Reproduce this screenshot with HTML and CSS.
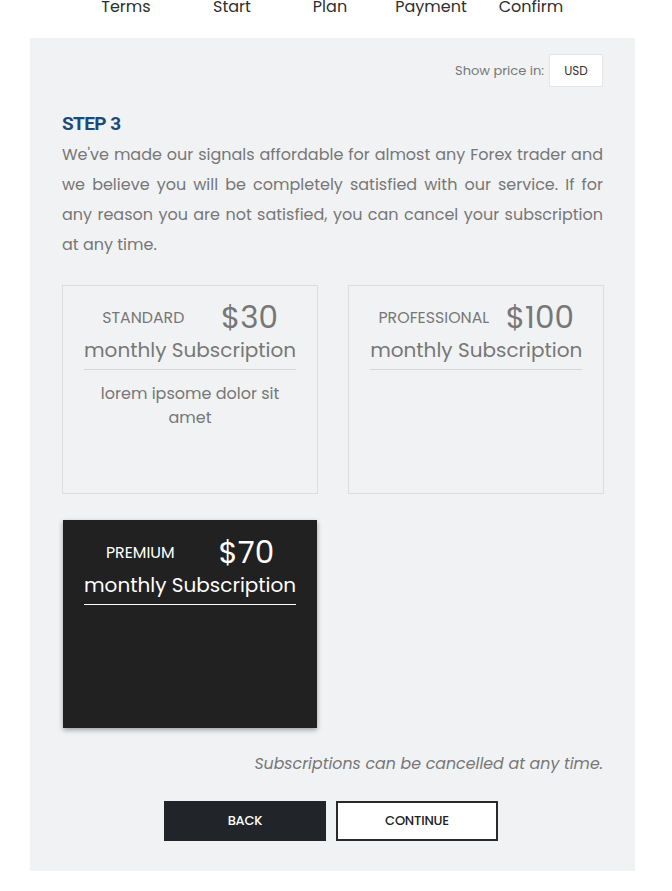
FILE: index.html
```html
<!DOCTYPE html>
<html lang="en">
<head>
<meta charset="utf-8">
<title>Step 3 - Plan</title>
<link rel="stylesheet" href="styles.css">
</head>
<body>
<nav class="steps">
  <span class="step">Terms</span>
  <span class="step">Start</span>
  <span class="step">Plan</span>
  <span class="step">Payment</span>
  <span class="step">Confirm</span>
</nav>
<main class="panel">
  <div class="currency">
    <span class="currency-label">Show price in:</span>
    <span class="currency-box">USD</span>
  </div>
  <h2 class="step-title">STEP 3</h2>
  <p class="intro">We've made our signals affordable for almost any Forex trader and we believe you will be completely satisfied with our service. If for any reason you are not satisfied, you can cancel your subscription at any time.</p>
  <div class="plans">
    <div class="plan">
      <div class="plan-head">
        <div class="plan-top"><span class="plan-name">STANDARD</span><span class="plan-price">$30</span></div>
        <div class="plan-sub">monthly Subscription</div>
      </div>
      <div class="plan-desc">lorem ipsome dolor sit amet</div>
    </div>
    <div class="plan">
      <div class="plan-head">
        <div class="plan-top"><span class="plan-name">PROFESSIONAL</span><span class="plan-price">$100</span></div>
        <div class="plan-sub">monthly Subscription</div>
      </div>
    </div>
    <div class="plan plan-active">
      <div class="plan-head">
        <div class="plan-top"><span class="plan-name">PREMIUM</span><span class="plan-price">$70</span></div>
        <div class="plan-sub">monthly Subscription</div>
      </div>
    </div>
  </div>
  <p class="note">Subscriptions can be cancelled at any time.</p>
  <div class="actions">
    <button class="btn btn-dark">BACK</button>
    <button class="btn btn-outline">CONTINUE</button>
  </div>
</main>
</body>
</html>
```
FILE: styles.css
```css
* { box-sizing: border-box; }
html, body { margin: 0; padding: 0; background: #fff; }
body {
  font-family: Poppins, "Open Sans", sans-serif;
  color: #777;
  overflow: hidden;
}
.steps {
  display: grid;
  grid-template-columns: 106px 106px 90px 112px 88px;
  margin-left: 73px;
  height: 38px;
  align-items: start;
}
.step {
  text-align: center;
  font-size: 16px;
  line-height: 20px;
  margin-top: -3px;
  color: #2e2e2e;
}
.panel {
  margin: 0 37px 0 30px;
  background: #f1f2f4;
  padding: 16px 32px 30px;
  height: 833px;
}
.currency {
  display: flex;
  justify-content: flex-end;
  align-items: center;
  gap: 5px;
}
.currency-label { font-size: 13px; color: #777; }
.currency-box {
  width: 54px;
  height: 33px;
  display: flex;
  align-items: center;
  justify-content: center;
  background: #fff;
  border: 1px solid #e3e4e6;
  border-radius: 2px;
  font-size: 12px;
  color: #333;
}
.step-title {
  margin: 25px 0 0;
  font-family: Roboto, sans-serif;
  font-weight: 700;
  font-size: 19px;
  line-height: 24px;
  letter-spacing: -0.6px;
  color: #1d4a78;
}
.intro {
  margin: 4px 0 0;
  font-size: 16px;
  line-height: 30px;
  text-align: justify;
  color: #777;
}
.plans {
  margin-top: 25px;
  display: grid;
  grid-template-columns: 1fr 1fr;
  column-gap: 30px;
  row-gap: 26px;
}
.plan {
  height: 209px;
  border: 1px solid #dcdde0;
  padding: 13px 21px 0;
  text-align: center;
}
.plan-head {
  border-bottom: 1px solid #d6d7da;
  padding-bottom: 4px;
}
.plan-top {
  display: flex;
  justify-content: space-around;
  align-items: center;
  height: 36px;
}
.plan-name { font-size: 15.8px; color: #777; }
.plan-price { font-size: 31px; color: #777; line-height: 36px; }
.plan-sub {
  font-size: 20px;
  line-height: 30px;
  color: #777;
  white-space: nowrap;
}
.plan-desc {
  margin: 12px 12px 0;
  font-size: 16px;
  line-height: 24px;
  color: #777;
}
.plan-active {
  margin: 0 1px;
  height: 208px;
  padding: 13px 20px 0;
  background: #212121;
  border-color: #212121;
  box-shadow: 0 2px 5px rgba(0, 0, 0, 0.35);
}
.plan-active .plan-head { border-bottom-color: #fff; }
.plan-active .plan-name,
.plan-active .plan-price,
.plan-active .plan-sub { color: #fff; }
.note {
  margin: 24px 0 0;
  text-align: right;
  font-style: italic;
  font-size: 15.8px;
  line-height: 24px;
  color: #777;
}
.actions {
  margin-top: 25px;
  padding-right: 3px;
  display: flex;
  justify-content: center;
  gap: 10px;
}
.btn {
  width: 162px;
  height: 40px;
  font-family: inherit;
  font-size: 13px;
  font-weight: 500;
  letter-spacing: -0.2px;
  border-radius: 0;
  cursor: pointer;
}
.btn-dark {
  background: #212529;
  border: 2px solid #212529;
  color: #fff;
}
.btn-outline {
  background: #fff;
  border: 2px solid #2a2a2a;
  color: #222;
}
```
